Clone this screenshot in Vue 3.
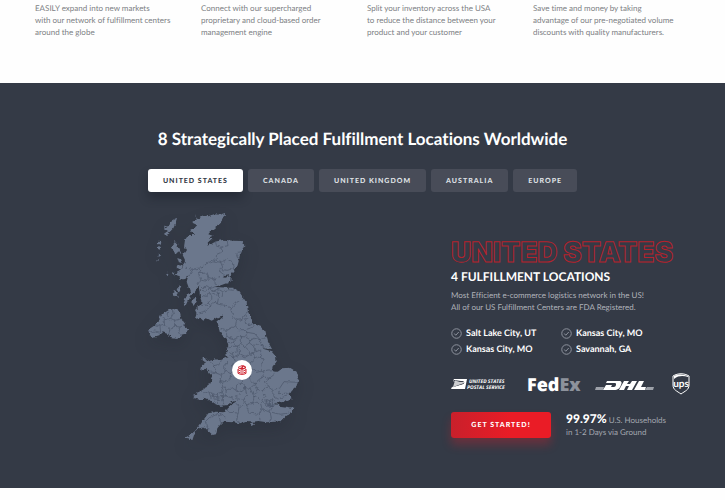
<script setup>
import { ref } from 'vue'

const features = [
  ['EASILY expand into new markets', 'with our network of fulfillment centers', 'around the globe'],
  ['Connect with our supercharged', 'proprietary and cloud-based order', 'management engine'],
  ['Split your inventory across the USA', 'to reduce the distance between your', 'product and your customer'],
  ['Save time and money by taking', 'advantage of our pre-negotiated volume', 'discounts with quality manufacturers.'],
]

const regions = ['United States', 'Canada', 'United Kingdom', 'Australia', 'Europe']
const active = ref('United States')

const cities = ['Salt Lake City, UT', 'Kansas City, MO', 'Kansas City, MO', 'Savannah, GA']
</script>

<template>
  <div class="page">
    <section class="features">
      <p v-for="lines in features" :key="lines[0]" class="feature">
        <template v-for="(line, i) in lines" :key="line"><br v-if="i" />{{ line }}</template>
      </p>
    </section>

    <section class="locations">
      <h2 class="heading">8 Strategically Placed Fulfillment Locations Worldwide</h2>

      <div class="tabs">
        <button
          v-for="name in regions"
          :key="name"
          type="button"
          class="tab"
          :class="{ active: name === active }"
          :aria-pressed="name === active"
          @click="active = name"
        >{{ name }}</button>
      </div>

      <div class="body">
        <div class="map-wrap">
          <svg class="map" viewBox="0 0 510 735" aria-hidden="true">
            <defs>
              <filter id="rugged" x="-5%" y="-5%" width="110%" height="110%" color-interpolation-filters="sRGB">
                <feTurbulence type="fractalNoise" baseFrequency="0.09" numOctaves="2" seed="4" result="n" />
                <feDisplacementMap in="SourceGraphic" in2="n" scale="12" xChannelSelector="R" yChannelSelector="G" />
              </filter>
              <clipPath id="land">
                <path d="M165 27L172 42 180 38 190 30 205 34 222 28 238 29 255 24 254 36 243 50 230 62 215 75 205 88 218 92 206 98 217 100 203 113 206 122 225 110 250 104 280 107 305 108 313 120 308 135 300 150 293 178 283 196 272 210 256 213 248 220 268 213 276 222 264 234 248 240 232 243 222 246 240 247 262 248 280 248 296 258 308 275 320 293 324 320 335 342 340 358 362 365 376 380 384 410 396 432 364 430 394 439 408 455 410 470 398 484 395 498 410 500 425 490 450 488 470 500 476 520 470 545 455 558 448 570 455 580 430 590 405 596 418 602 460 608 458 622 440 632 425 648 405 650 380 652 355 648 340 650 320 648 300 655 280 652 250 650 240 660 232 670 228 688 218 690 205 678 195 668 180 668 165 682 157 706 145 700 135 698 150 690 165 678 180 660 190 645 205 625 230 620 250 622 262 612 287 588 275 590 262 600 240 603 220 595 205 582 190 578 185 585 168 582 158 570 175 563 195 550 210 538 218 520 208 500 195 488 183 497 187 480 200 470 225 463 243 465 262 457 258 440 265 420 258 400 248 392 240 380 232 350 255 331 235 335 215 347 200 340 190 347 180 338 165 342 170 325 165 315 180 300 185 290 180 275 178 255 175 244 165 260 150 275 143 282 150 260 140 230 145 210 115 215 108 205 125 195 130 180 135 165 128 150 138 135 132 125 135 105 145 90 162 90 150 75 168 65 160 50 170 45Z" />
              </clipPath>
            </defs>
            <g filter="url(#rugged)">
              <g class="land">
                <path d="M165 27L172 42 180 38 190 30 205 34 222 28 238 29 255 24 254 36 243 50 230 62 215 75 205 88 218 92 206 98 217 100 203 113 206 122 225 110 250 104 280 107 305 108 313 120 308 135 300 150 293 178 283 196 272 210 256 213 248 220 268 213 276 222 264 234 248 240 232 243 222 246 240 247 262 248 280 248 296 258 308 275 320 293 324 320 335 342 340 358 362 365 376 380 384 410 396 432 364 430 394 439 408 455 410 470 398 484 395 498 410 500 425 490 450 488 470 500 476 520 470 545 455 558 448 570 455 580 430 590 405 596 418 602 460 608 458 622 440 632 425 648 405 650 380 652 355 648 340 650 320 648 300 655 280 652 250 650 240 660 232 670 228 688 218 690 205 678 195 668 180 668 165 682 157 706 145 700 135 698 150 690 165 678 180 660 190 645 205 625 230 620 250 622 262 612 287 588 275 590 262 600 240 603 220 595 205 582 190 578 185 585 168 582 158 570 175 563 195 550 210 538 218 520 208 500 195 488 183 497 187 480 200 470 225 463 243 465 262 457 258 440 265 420 258 400 248 392 240 380 232 350 255 331 235 335 215 347 200 340 190 347 180 338 165 342 170 325 165 315 180 300 185 290 180 275 178 255 175 244 165 260 150 275 143 282 150 260 140 230 145 210 115 215 108 205 125 195 130 180 135 165 128 150 138 135 132 125 135 105 145 90 162 90 150 75 168 65 160 50 170 45Z" />
                <path d="M24 374L40 364 54 352 60 337 72 324 88 314 112 312 120 325 124 342 136 352 132 362 144 372 140 385 122 390 112 402 94 400 86 388 68 382 58 394 42 398 28 390Z" />
                <path d="M111 38L106 56 100 70 88 82 78 94 72 86 84 78 70 68 88 62 92 48Z" />
                <path d="M55 110L64 112 62 120 52 116ZM54 124L63 126 60 134 54 132ZM54 146L60 148 58 156 53 152ZM52 162L58 164 54 168Z" />
                <path d="M104 108L112 116 110 126 118 132 124 146 112 142 106 150 102 138 90 130 98 124Z" />
                <path d="M112 156L122 160 128 174 116 170ZM112 180L128 184 124 194 110 190ZM78 206L86 202 82 212ZM100 200L106 206 100 210Z" />
                <path d="M118 236L124 246 116 262 110 254ZM102 258L112 264 116 276 104 274 98 266Z" />
                <path d="M148 262L152 276 142 290 136 304 130 298 136 280ZM158 278L168 276 170 290 162 300 154 292Z" />
                <path d="M188 456L198 456 202 464 196 472 188 466ZM330 654L340 653 345 659 336 663ZM114 210L138 196 150 204 136 222 118 224Z" />
              </g>
              <path class="rim" d="M60 335L72 340 74 360 60 364 46 358M74 344L92 340 100 326 96 314M92 340L104 346 122 342M104 346L104 364 90 370 74 360M104 364L120 366 134 360M90 370L86 388M60 364L62 382 44 378 26 382M120 366L116 384 122 390M86 320L84 336" />
              <g class="rim" clip-path="url(#land)">
                <path d="M226 108L230 124 246 126 244 142 230 148 228 162 220 168M246 126L264 122 262 108M310 140L292 142 290 154 302 158M220 168L204 172 188 186 176 206 182 224 172 240M222 168L242 172 248 186 240 200 256 212M242 172L262 162 276 172 282 190 262 196 246 194M176 206L200 204 206 218 224 222 240 212M206 218L198 228 184 226M224 222L226 238M136 190L160 192 188 188M160 192L148 210" />
                <path d="M178 242L190 250 200 242 212 250 224 246M180 256L196 258 208 250 220 258 234 252 248 260 264 254 280 256 290 254M186 272L200 274 208 260 226 268 240 264M300 286L284 296 272 310 258 302 236 298 222 292 210 304 198 300 184 302M208 260L216 276 208 290 210 304M234 252L236 276 232 296M250 260L246 276M210 304L198 318 176 324M272 310L278 334 290 346 306 344 318 324 324 320" />
                <path d="M290 346L286 362 296 374 316 374 342 366M316 326L320 340 314 350 324 362 338 356M286 362L258 378 244 372M258 378L262 396 284 402 302 394 316 396 322 382 314 374M322 382L344 386 360 404 378 398M316 396L330 404 344 400 360 404 366 422 380 428M284 402L280 414 290 424 304 418 314 424 328 414 330 404M262 412L280 414M304 394L304 418M328 414L340 422 354 416 366 422M264 430L278 424 290 424 292 440 276 444 262 438M276 444L282 458 298 450 314 458 330 448 326 436 314 424M298 424L298 450M330 448L346 440 340 422M346 440L360 434" />
                <path d="M270 452L282 458 286 470M340 444L344 462 330 474 334 490M344 462L362 454 372 466 362 480 366 498 396 494M362 434L362 454" />
                <path d="M210 470L222 482 238 478 244 466M222 482L228 504 212 500M228 504L244 510 256 498 250 484 262 470M244 510L240 526 250 542 244 562 224 568 206 560 190 566M256 498L272 506 284 494 276 474M254 530L270 524 272 506M254 530L240 526M250 542L258 556 276 548 288 556 290 540 306 534 312 518 294 512 284 494M206 560L214 580M220 568L226 596M232 566L236 598M244 562L250 572 244 584 252 598M224 582L250 584M214 572L236 576 258 572M258 556L260 574 282 580" />
                <path d="M312 518L328 512 334 490 350 502 366 498 370 516 388 520 408 504M328 512L330 530 346 536 356 524 370 516M288 556L306 560 316 548 330 550 346 536M306 534L316 548M316 548L320 570 310 586 320 600 338 594 342 574 330 550M346 536L352 552 342 574M352 552L368 560 384 542 372 530 388 520M384 542L400 554 420 548 432 530 474 532M400 554L398 572 414 582 446 570M420 548L416 566 450 564M368 560L374 574 366 588 378 598 396 602 410 596M342 574L360 580 366 588M320 600L326 624 358 628 366 612 362 596 338 594M366 612L390 622 396 606M390 622L394 638 388 650M396 622L420 628 446 624M358 628L360 646M310 586L290 580M320 600L298 604 286 594M298 604L294 624 268 622 262 612M294 624L290 644 300 650M256 636L236 626 208 638 196 650 204 674M236 626L242 656M300 566L290 572 292 584" />
                <path d="M374 590L382 584 390 588 400 584 408 592M376 598L384 594 392 598 400 592M380 584L384 604M388 586L390 606M396 584L398 604M378 604L392 602 404 600" />
              </g>
            </g>
          </svg>
          <span class="pin">
            <svg viewBox="0 0 30 30" aria-hidden="true">
              <path fill="#cf2733" d="M4 5L14 1H20L27 5V10L15 15 3 10Z" />
              <path fill="#fff" d="M5 7L13 4 15 6 9 9ZM19 5L24 7 20 9 17 8Z" />
              <path fill="none" stroke="#cf2733" stroke-width="3" d="M3 12V25L10 28H20L27 25V12M3 14L11 18H19L27 14M4 21L11 24H19L26 21" />
            </svg>
          </span>
        </div>

        <div class="info">
          <h3 class="country">UNITED STATES</h3>
          <h4 class="count">4 FULFILLMENT LOCATIONS</h4>
          <p class="blurb">Most Efficient e-commerce logistics network in the US!<br />All of our US Fulfillment Centers are FDA Registered.</p>

          <ul class="cities">
            <li v-for="(city, i) in cities" :key="i">
              <svg viewBox="0 0 22 22" aria-hidden="true">
                <circle cx="11" cy="11" r="9.5" />
                <path d="M6.500 11l3 3.500 6-6.500" />
              </svg>
              {{ city }}
            </li>
          </ul>

          <div class="carriers">
            <svg class="usps" viewBox="0 0 59 22" role="img" aria-label="United States Postal Service">
              <path fill="#fff" d="M3 6H16L14 16H0L1 14 12 11C14 10 13 9 11 9H4L2 8Z" />
              <path fill="#343a46" d="M3 7L10 8C14 8 14 10 12 11L1 14.500 9 10.500 2 8Z" />
              <path fill="#fff" d="M4 7.500L9 9H13V10L2 14Z" opacity=".75" />
              <text x="18" y="10">UNITED STATES</text>
              <text x="16" y="16">POSTAL SERVICE</text>
            </svg>
            <svg class="fedex" viewBox="0 0 49 22" role="img" aria-label="FedEx">
              <text x="-1" y="18">Fed<tspan>Ex</tspan></text>
            </svg>
            <svg class="dhl" viewBox="0 0 59 22" role="img" aria-label="DHL">
              <path fill="#9da1a9" d="M1 14H9L8 17H0ZM52 14H59L58 17H50Z" />
              <path fill="#fff" fill-rule="evenodd" d="M12 8H24C27 8 27 10 26 12C25 15 23 17 19 17H8L11 12H17L16 14H19C21 14 22 10 20 10H11ZM29 8H34L32 11H35L37 8H42L37 17H32L34 13H31L29 17H24ZM44 8H49L46 14H51L50 17H39Z" />
            </svg>
            <svg class="ups" viewBox="0 0 18 22" role="img" aria-label="UPS">
              <path d="M1 3C6 0 12 0 17 3V12C17 17 13 18 9 21C5 18 1 17 1 12Z" />
              <path class="swoosh" d="M2 6C7 2 12 3 16 4V3C11 1 6 1 2 3Z" />
              <text x="9" y="14">ups</text>
            </svg>
          </div>

          <div class="cta">
            <button type="button" class="start">GET STARTED!</button>
            <p class="reach"><strong>99.97%</strong> U.S. Households<br />in 1-2 Days via Ground</p>
          </div>
        </div>
      </div>
    </section>
  </div>
</template>

<style>
body {
  margin: 0;
  background: #fefefe;
}
</style>

<style scoped>
.page {
  font-family: Lato, "Open Sans", sans-serif;
  font-variant-ligatures: none;
  text-rendering: geometricPrecision;
  padding-bottom: 11px;
}
h2, h3, h4, p, ul {
  margin: 0;
  padding: 0;
}
button {
  font-family: inherit;
  text-rendering: inherit;
  border: 0;
  padding: 0;
  cursor: pointer;
}
.features {
  display: grid;
  grid-template-columns: repeat(4, 1fr);
  padding: 2px 26px 45px 35px;
}
.feature {
  font-size: 8px;
  line-height: 12px;
  color: #7d7f84;
  white-space: nowrap;
}
.locations {
  background: #343a46;
  padding: 44px 0 38px;
}
.heading {
  color: #fff;
  font-size: 17px;
  line-height: 24px;
  font-weight: 700;
  text-align: center;
}
.tabs {
  display: flex;
  justify-content: center;
  gap: 5px;
  margin-top: 18px;
}
.tab {
  height: 23px;
  padding: 0 15px;
  border-radius: 3px;
  background: #484c58;
  color: #dfe0e4;
  font-size: 7px;
  font-weight: 900;
  letter-spacing: 1px;
  text-transform: uppercase;
}
.tab.active {
  background: #fff;
  color: #343a46;
  box-shadow: 0 6px 10px rgba(20, 24, 34, 0.4);
}
.body {
  display: grid;
  grid-template-columns: 311fr 274fr;
  padding-left: 140px;
  margin-top: 13px;
}
.map-wrap {
  position: relative;
  width: 170px;
}
.map {
  display: block;
  width: 100%;
  filter: drop-shadow(0 8px 8px rgba(25, 30, 42, 0.2));
}
.land {
  fill: #6b778c;
}
.rim {
  fill: none;
  stroke: #4a5468;
  stroke-width: 2;
}
.pin {
  position: absolute;
  left: 92px;
  top: 155px;
  width: 20px;
  height: 20px;
  border-radius: 50%;
  background: #fff;
  display: flex;
  align-items: center;
  justify-content: center;
}
.pin svg {
  width: 10px;
  height: 10px;
}
.info {
  padding-top: 33px;
}
.country {
  font-family: Inter, sans-serif;
  font-size: 28px;
  line-height: 28px;
  font-weight: 900;
  color: transparent;
  -webkit-text-stroke: 1px #b5222d;
  white-space: nowrap;
}
.count {
  margin-top: 3px;
  color: #fff;
  font-size: 12px;
  line-height: 16px;
}
.blurb {
  margin-top: 4px;
  color: #b0b3ba;
  font-size: 8px;
  line-height: 12px;
}
.cities {
  display: grid;
  grid-template-columns: 110px 1fr;
  margin-top: 12px;
  list-style: none;
}
.cities li {
  display: flex;
  align-items: center;
  gap: 4px;
  color: #fff;
  font-size: 9px;
  line-height: 16px;
  font-weight: 700;
}
.cities svg {
  width: 11px;
  height: 11px;
  fill: none;
  stroke: #8d929d;
  stroke-width: 2;
}
.carriers {
  display: flex;
  justify-content: space-between;
  width: 239px;
  margin-top: 16px;
}
.carriers svg {
  display: block;
  height: 22px;
  overflow: visible;
}
.usps {
  width: 59px;
}
.usps text {
  fill: #fff;
  font-family: "Open Sans", sans-serif;
  font-size: 5px;
  font-style: italic;
  font-weight: 700;
}
.fedex {
  width: 49px;
}
.fedex text {
  fill: #fff;
  font-family: "Open Sans", sans-serif;
  font-size: 18px;
  font-weight: 800;
}
.fedex tspan {
  fill: #8d929c;
}
.dhl {
  width: 59px;
}
.ups {
  width: 18px;
}
.ups path {
  fill: none;
  stroke: #fff;
}
.ups .swoosh {
  fill: #fff;
  stroke: none;
}
.ups text {
  fill: #fff;
  font-size: 10px;
  font-weight: 700;
  text-anchor: middle;
}
.cta {
  display: flex;
  align-items: center;
  gap: 15px;
  margin-top: 17px;
}
.start {
  width: 100px;
  height: 26px;
  border-radius: 3px;
  background: linear-gradient(90deg, #c9202b, #ea1c26 60%);
  color: #fff;
  font-size: 7px;
  font-weight: 900;
  letter-spacing: 1px;
  box-shadow: 0 7px 10px rgba(222, 30, 42, 0.3);
}
.reach {
  color: #a3a7af;
  font-size: 8px;
  line-height: 12px;
}
.reach strong {
  color: #fff;
  font-size: 12px;
  font-weight: 900;
}
</style>
